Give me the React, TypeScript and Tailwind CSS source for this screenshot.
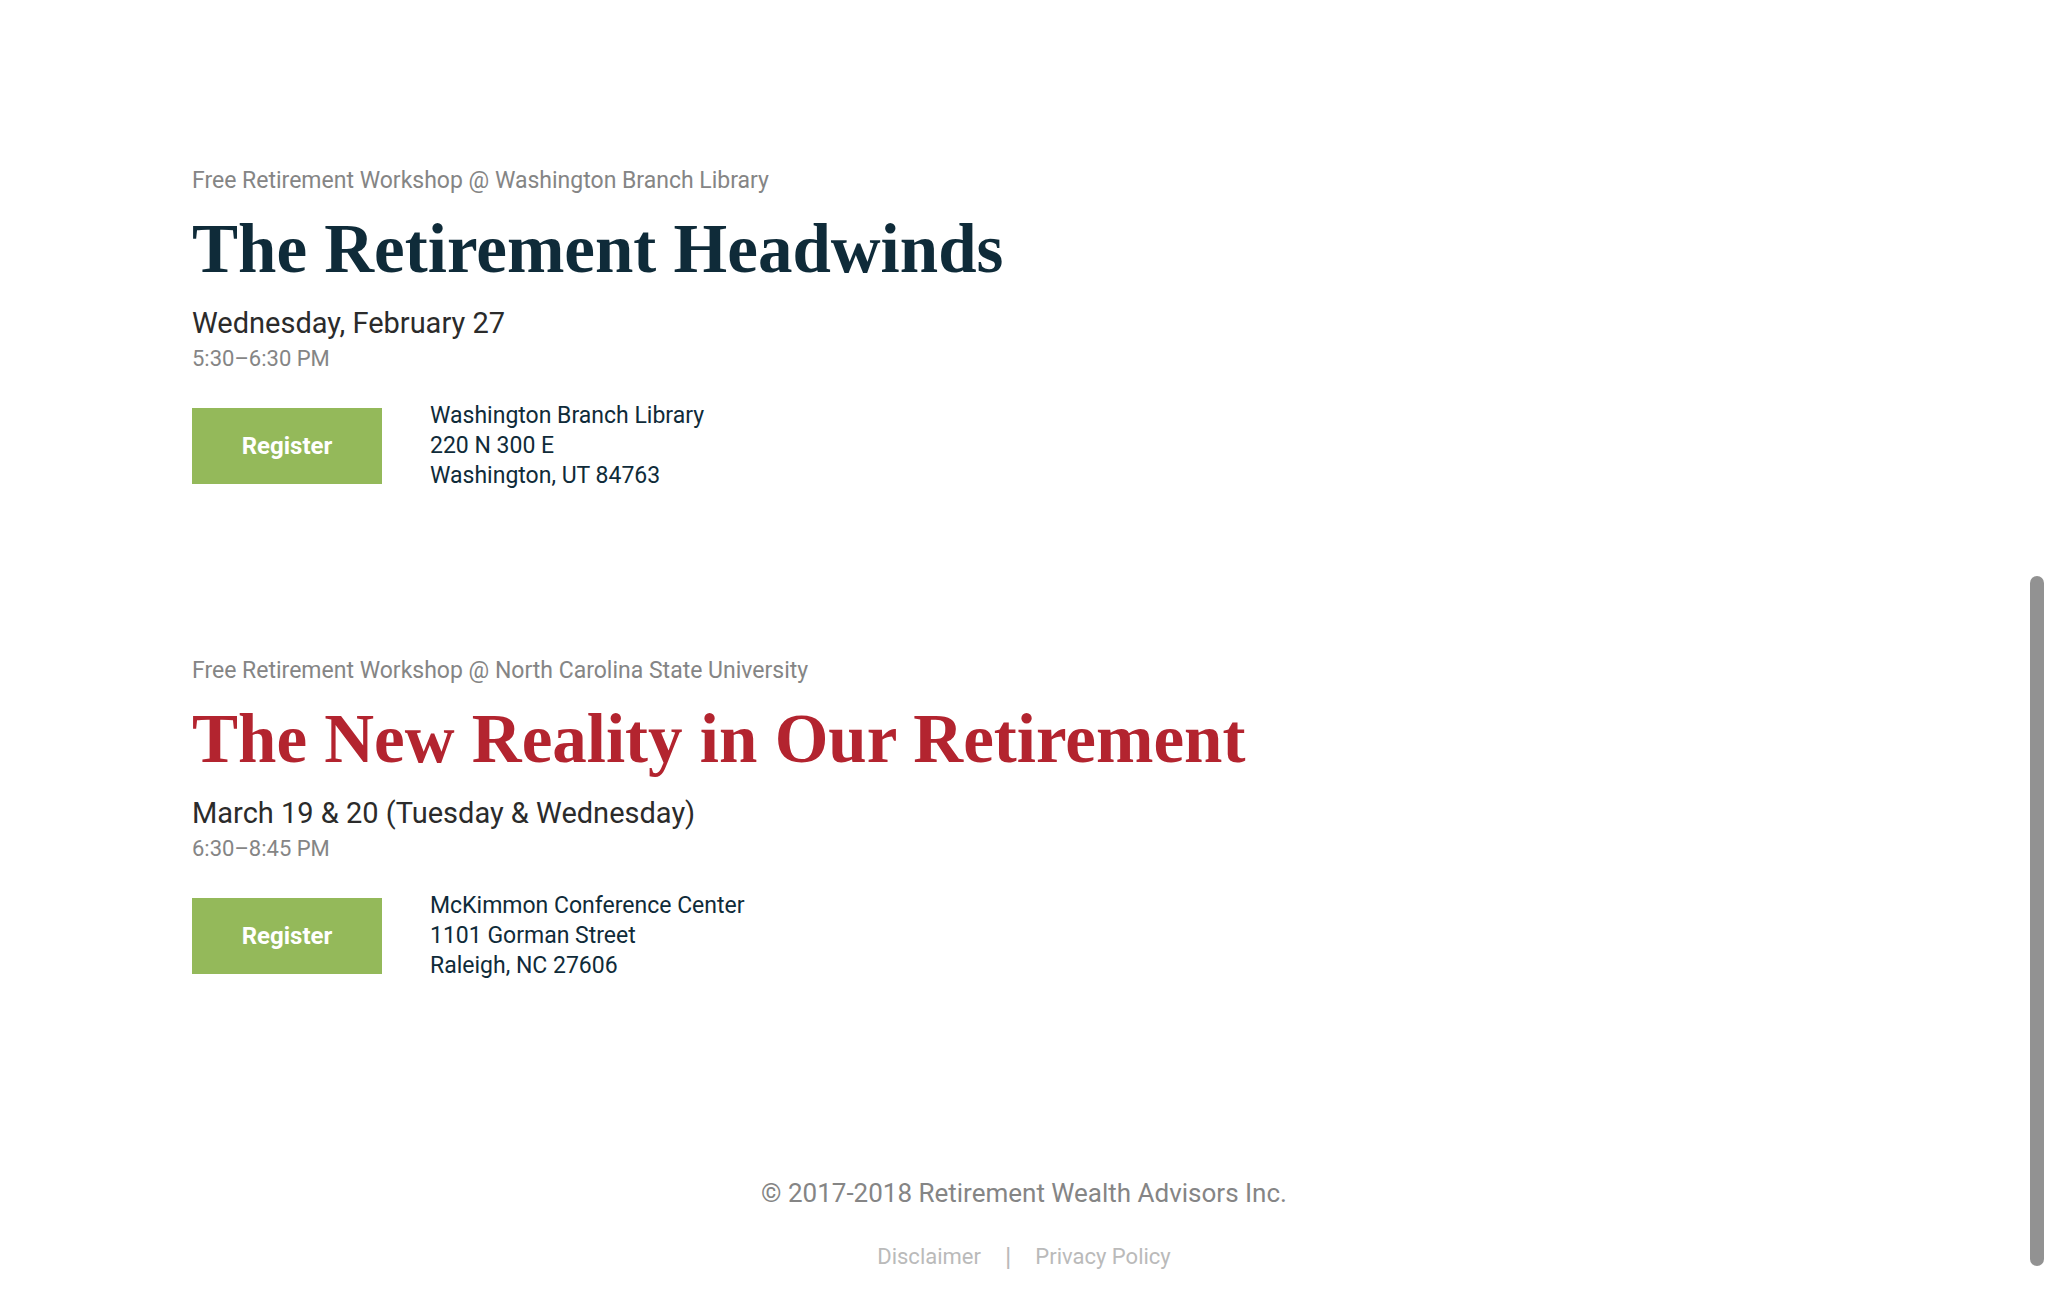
import React from "react";

type Workshop = {
  venue: string;
  title: string;
  titleClass: string;
  date: string;
  time: string;
  address: string[];
};

const workshops: Workshop[] = [
  {
    venue: "Free Retirement Workshop @ Washington Branch Library",
    title: "The Retirement Headwinds",
    titleClass: "text-[#0f2b39]",
    date: "Wednesday, February 27",
    time: "5:30–6:30 PM",
    address: ["Washington Branch Library", "220 N 300 E", "Washington, UT 84763"],
  },
  {
    venue: "Free Retirement Workshop @ North Carolina State University",
    title: "The New Reality in Our Retirement",
    titleClass: "text-[#b3242f]",
    date: "March 19 & 20 (Tuesday & Wednesday)",
    time: "6:30–8:45 PM",
    address: ["McKimmon Conference Center", "1101 Gorman Street", "Raleigh, NC 27606"],
  },
];

function WorkshopCard({ w }: { w: Workshop }) {
  return (
    <article>
      <p className="text-[23px] leading-8 text-[#858585]">{w.venue}</p>
      <h2 className={`mt-3 font-['Liberation_Serif',serif] text-[69px] leading-[80px] font-bold ${w.titleClass}`}>
        {w.title}
      </h2>
      <p className="mt-3.5 text-[29px] leading-10 text-[#2b2b2b]">{w.date}</p>
      <p className="text-[22px] leading-8 text-[#858585]">{w.time}</p>
      <div className="mt-6.5 flex items-center gap-12">
        <button type="button" className="h-[76px] w-[190px] bg-[#94b95a] text-2xl font-bold text-white">
          Register
        </button>
        <address className="text-[23px] leading-[30px] text-[#0f2b39] not-italic">
          {w.address.map((line) => (
            <div key={line}>{line}</div>
          ))}
        </address>
      </div>
    </article>
  );
}

export default function App() {
  return (
    <div className="relative bg-white font-['Roboto',sans-serif]">
      <main className="flex flex-col gap-[164px] px-48 pt-[165px]">
        {workshops.map((w) => (
          <WorkshopCard key={w.title} w={w} />
        ))}
      </main>
      <footer className="pt-48 pb-6 text-center">
        <p className="text-[26px] leading-10 text-[#858585]">© 2017-2018 Retirement Wealth Advisors Inc.</p>
        <nav className="mt-6 flex items-center justify-center text-[22px] leading-10 text-[#bababa]">
          <a href="#disclaimer">Disclaimer</a>
          <span className="mx-6 text-[26px]">|</span>
          <a href="#privacy">Privacy Policy</a>
        </nav>
      </footer>
      <div className="absolute top-[576px] right-1 h-[690px] w-3.5 rounded-full bg-[#929292]" />
    </div>
  );
}
